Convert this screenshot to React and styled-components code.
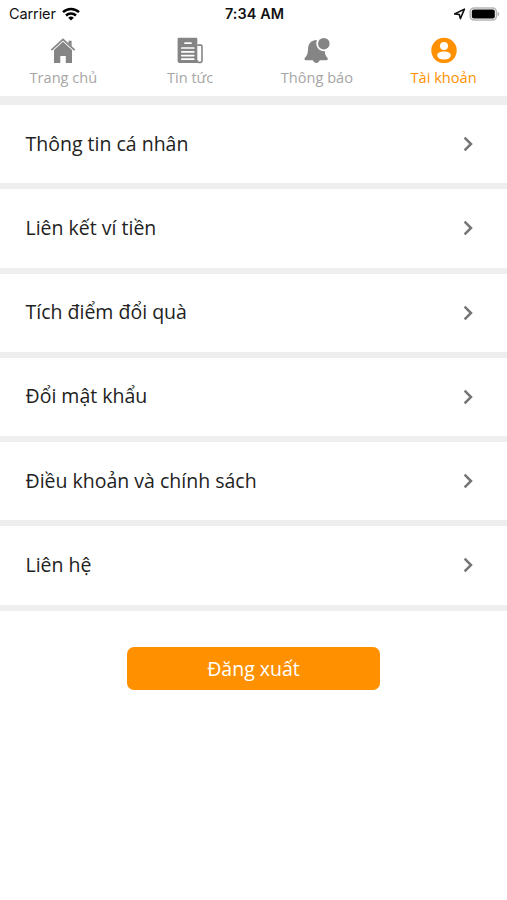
import React, { useState } from 'react';
import styled, { createGlobalStyle } from 'styled-components';

const GlobalStyle = createGlobalStyle`
  body {
    margin: 0;
    background: #ffffff;
    font-family: 'Open Sans', 'Noto Sans', sans-serif;
  }
`;

const Screen = styled.div`
  display: flex;
  flex-direction: column;
  min-height: 900px;
`;

const StatusBar = styled.div`
  display: grid;
  grid-template-columns: 1fr auto 1fr;
  align-items: center;
  height: 27px;
  box-sizing: border-box;
  padding: 0 7px 0 9px;
  font-family: Inter, sans-serif;
  font-size: 14px;
  color: #111111;
`;
const Carrier = styled.div`
  display: flex;
  align-items: center;
  gap: 6px;
  font-size: 14.5px;
  letter-spacing: -0.1px;
`;
const Clock = styled.div`
  font-weight: 600;
  font-size: 14.4px;
  letter-spacing: 0.1px;
`;
const Indicators = styled.div`
  display: flex;
  align-items: center;
  justify-content: flex-end;
  gap: 3px;
`;

const TabBar = styled.nav`
  display: flex;
  height: 69px;
  border-bottom: 9px solid #eeeeee;
`;
const Tab = styled.button`
  flex: 1;
  display: flex;
  flex-direction: column;
  align-items: center;
  padding: 10px 0 0;
  border: none;
  background: none;
  cursor: pointer;
  font-family: inherit;
  font-size: 14.6px;
  line-height: 20px;
  color: ${(props) => (props.$active ? '#ff9100' : '#a6a6a6')};

  svg {
    display: block;
    margin-bottom: 3px;
    color: ${(props) => (props.$active ? '#ff9100' : '#858585')};
  }
`;

const Menu = styled.div`
  display: flex;
  flex-direction: column;
`;
const MenuItem = styled.button`
  display: flex;
  align-items: center;
  justify-content: space-between;
  height: 84.25px;
  box-sizing: border-box;
  padding: 0 34px 0 25.5px;
  border: none;
  border-bottom: 6px solid #eeeeee;
  background: #ffffff;
  cursor: pointer;
  font-family: inherit;
  font-size: 19.5px;
  color: #222222;
`;
const MenuLabel = styled.span`
  padding-bottom: 2px;
`;

const LogoutButton = styled.button`
  align-self: center;
  width: 253px;
  height: 43px;
  margin-top: 36.5px;
  padding: 0 0 1px;
  border: none;
  border-radius: 7px;
  background: #ff9100;
  cursor: pointer;
  font-family: inherit;
  font-size: 19.5px;
  color: #ffffff;
`;

const WifiIcon = () => (
  <svg width="18" height="14" viewBox="0 0 18 14" fill="none" stroke="#000" strokeWidth="2.5">
    <path d="M1 5.2a11.6 11.6 0 0 1 16 0" />
    <path d="M4 8.5a7.3 7.3 0 0 1 10 0" />
    <path d="M9 13.6 6.2 10.8a4 4 0 0 1 5.6 0z" fill="#000" stroke="none" />
  </svg>
);

const LocationIcon = () => (
  <svg width="13" height="12" viewBox="0 0 13 12" fill="none" stroke="#111" strokeWidth="1.6" strokeLinejoin="round">
    <path d="M1.6 5.9 11.4 1.2 7.4 10.6 6.3 6.5z" />
  </svg>
);

const BatteryIcon = () => (
  <svg width="31" height="14" viewBox="0 0 31 14">
    <rect x="1.2" y="0.9" width="26.2" height="12.2" rx="3.8" fill="#fff" stroke="#b5b5b5" strokeWidth="1.5" />
    <rect x="2.8" y="2.5" width="23" height="9" rx="2" fill="#000" />
    <path d="M28.6 4.7c2.2.7 2.2 3.9 0 4.6z" fill="#b0b0b0" />
  </svg>
);

const HomeIcon = () => (
  <svg width="26" height="27" viewBox="0 0 26 27">
    <path d="M1.3 13.2 13 2.3l11.7 10.9" fill="none" stroke="currentColor" strokeWidth="1.7" />
    <path d="M18.5 3.7h3.1v5.8l-3.1-2.9z" fill="currentColor" />
    <path d="M13 4.7 22 13v13h-6.2v-7h-5.5v7H4V13z" fill="currentColor" />
  </svg>
);

const NewsIcon = () => (
  <svg width="26" height="27" viewBox="0 0 26 27">
    <path
      d="M2 .8h17.3a1 1 0 0 1 1 1v21.8c0 .9.3 1.7.8 2.4H3.2A2.6 2.6 0 0 1 .6 23.4V2.2A1.4 1.4 0 0 1 2 .8z"
      fill="currentColor"
    />
    <path
      d="M20.3 8.1h3.4a1.3 1.3 0 0 1 1.3 1.3v13.8a2.3 2.3 0 0 1-4.7 0"
      fill="none"
      stroke="currentColor"
      strokeWidth="1.6"
    />
    <path d="M8 6.2h6M4.8 11h12M4.8 14.8h12M4.8 18.6h12M4.8 22.2h12" stroke="#fff" strokeWidth="1.7" strokeLinecap="round" />
  </svg>
);

const BellIcon = () => (
  <svg width="26" height="27" viewBox="0 0 26 27" fill="currentColor">
    <path d="M13 3.1C7.2 3 4.1 6.9 4 12.1c-.1 4.4-.9 6.7-3 8.7-1 1-.6 2.5 1 2.5h6.8c.8 1.6 1.9 2.6 3.5 2.6s2.8-1 3.5-2.6h6.5c1.6 0 2-1.5 1-2.5-1.5-1.5-2.3-3.5-2.6-6.7C16.2 14.6 12.7 11.1 12.3 7c-.1-1.4.1-2.7.7-3.9z" />
    <circle cx="19.8" cy="6.7" r="5.8" />
  </svg>
);

const AccountIcon = () => (
  <svg width="26" height="27" viewBox="0 0 26 27">
    <circle cx="13" cy="13.4" r="12.7" fill="currentColor" />
    <circle cx="13" cy="8.9" r="4" fill="#fff" />
    <path
      d="M13 14.6c3.4 0 6.8 1.3 6.8 3.7 0 2.8-3.3 4.3-6.8 4.3s-6.8-1.5-6.8-4.3c0-2.4 3.4-3.7 6.8-3.7z"
      fill="#fff"
    />
  </svg>
);

const ChevronIcon = () => (
  <svg width="10" height="16" viewBox="0 0 10 16" fill="none" stroke="#757575" strokeWidth="2.5">
    <path d="M1.6 1.6 8 8l-6.4 6.4" />
  </svg>
);

const tabs = [
  { id: 'home', label: 'Trang chủ', Icon: HomeIcon },
  { id: 'news', label: 'Tin tức', Icon: NewsIcon },
  { id: 'notice', label: 'Thông báo', Icon: BellIcon },
  { id: 'account', label: 'Tài khoản', Icon: AccountIcon },
];

const menuItems = [
  'Thông tin cá nhân',
  'Liên kết ví tiền',
  'Tích điểm đổi quà',
  'Đổi mật khẩu',
  'Điều khoản và chính sách',
  'Liên hệ',
];

function App() {
  const [activeTab, setActiveTab] = useState('account');

  return (
    <Screen>
      <GlobalStyle />
      <StatusBar>
        <Carrier>
          Carrier
          <WifiIcon />
        </Carrier>
        <Clock>7:34 AM</Clock>
        <Indicators>
          <LocationIcon />
          <BatteryIcon />
        </Indicators>
      </StatusBar>
      <TabBar>
        {tabs.map(({ id, label, Icon }) => (
          <Tab key={id} $active={id === activeTab} onClick={() => setActiveTab(id)}>
            <Icon />
            {label}
          </Tab>
        ))}
      </TabBar>
      <Menu>
        {menuItems.map((item) => (
          <MenuItem key={item}>
            <MenuLabel>{item}</MenuLabel>
            <ChevronIcon />
          </MenuItem>
        ))}
      </Menu>
      <LogoutButton>Đăng xuất</LogoutButton>
    </Screen>
  );
}

export default App;
